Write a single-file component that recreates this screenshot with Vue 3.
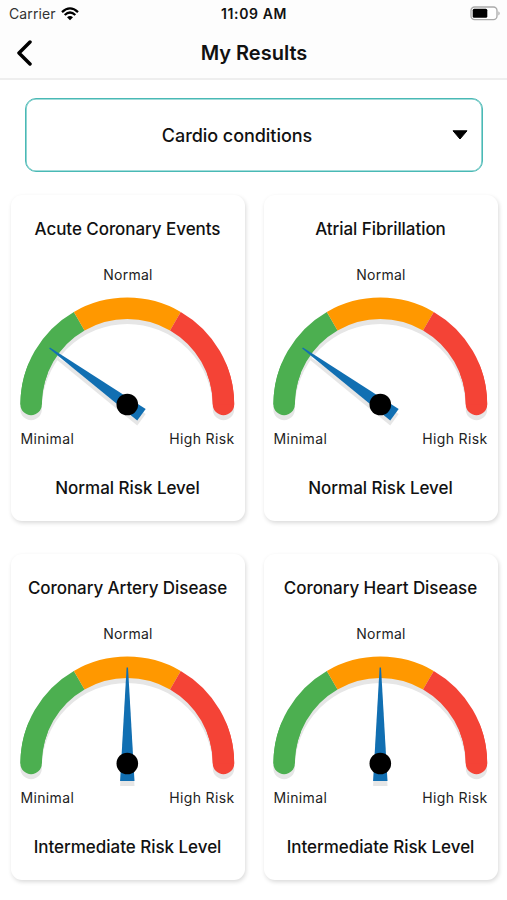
<script setup>
const results = [
  { title: 'Acute Coronary Events', level: 'Normal Risk Level', angle: -54 },
  { title: 'Atrial Fibrillation', level: 'Normal Risk Level', angle: -54 },
  { title: 'Coronary Artery Disease', level: 'Intermediate Risk Level', angle: 0 },
  { title: 'Coronary Heart Disease', level: 'Intermediate Risk Level', angle: 0 },
]
</script>

<template>
  <div class="screen">
    <header class="header">
      <div class="status">
        <div class="carrier">
          <span>Carrier</span>
          <svg class="wifi" viewBox="0 0 18 14">
            <path d="M1 5.1Q9-2.3 17 5.1" />
            <path d="M3.7 8Q9 3.1 14.3 8" />
            <path class="dot" d="M6 10.3Q9 7.7 12 10.3L9 13.3Z" />
          </svg>
        </div>
        <span class="time">11:09 AM</span>
        <svg class="battery" viewBox="0 0 31 15">
          <rect x="1" y="1" width="26" height="12.6" rx="3.6" />
          <rect class="charge" x="2.7" y="2.8" width="14.6" height="9" rx="1.5" />
          <path d="M28.4 5.2Q31 7.3 28.4 9.4Z" />
        </svg>
      </div>
      <div class="nav">
        <svg class="back" viewBox="0 0 16 26">
          <path d="M14 2L3 13L14 24" />
        </svg>
        <h1>My Results</h1>
      </div>
    </header>

    <main>
      <div class="select">
        <span class="select-label">Cardio conditions</span>
        <svg class="caret" viewBox="0 0 16 10">
          <path d="M1 .8H15L8 9Z" />
        </svg>
      </div>

      <div class="grid">
        <section v-for="item in results" :key="item.title" class="card">
          <h2>{{ item.title }}</h2>
          <p class="top-label">Normal</p>
          <svg class="gauge" viewBox="0 0 234 130">
            <g class="shadow" transform="translate(0 5)">
              <path class="arc round" d="M20.1 109.5A96.2 96.2 0 0 1 212.5 109.5" />
              <path class="needle" :transform="`rotate(${item.angle} 116.3 109.5)`" d="M115.6 13.4H117L123.5 127H109.1Z" />
            </g>
            <path class="arc round green" d="M20.1 109.5A96.2 96.2 0 0 1 26.5 75" />
            <path class="arc round red" d="M212.5 109.5A96.2 96.2 0 0 0 206.1 75" />
            <path class="arc green" d="M20.1 109.5A96.2 96.2 0 0 1 68.2 26.2" />
            <path class="arc orange" d="M68.2 26.2A96.2 96.2 0 0 1 164.4 26.2" />
            <path class="arc red" d="M164.4 26.2A96.2 96.2 0 0 1 212.5 109.5" />
            <path class="needle" :transform="`rotate(${item.angle} 116.3 109.5)`" d="M115.6 13.4H117L123.5 127H109.1Z" />
            <circle cx="116.3" cy="109.5" r="10.8" />
          </svg>
          <div class="ends"><span>Minimal</span><span>High Risk</span></div>
          <p class="level">{{ item.level }}</p>
        </section>
      </div>
    </main>
  </div>
</template>

<style>
body {
  background: #fff;
  overflow: hidden;
}
</style>

<style scoped>
.screen {
  width: 507px;
  height: 900px;
  overflow: hidden;
  font-family: Inter, "Liberation Sans", sans-serif;
  color: #111;
}
h1, h2, p { margin: 0; }
svg { display: block; }
.header {
  box-sizing: border-box;
  height: 80px;
  background: #fdfdfd;
  border-bottom: 2px solid #eee;
}
.status {
  height: 27px;
  display: grid;
  grid-template-columns: 1fr auto 1fr;
  align-items: center;
  padding: 0 6px 0 9px;
}
.carrier {
  display: flex;
  align-items: center;
  gap: 5px;
  font-size: 14px;
  letter-spacing: .1px;
  color: #333;
}
.wifi { width: 18px; height: 14px; fill: none; stroke: #000; stroke-width: 2.3; }
.wifi .dot { fill: #000; stroke: none; }
.time { margin-right: 2px; font-size: 14px; letter-spacing: .6px; font-weight: 600; }
.battery { width: 31px; height: 15px; justify-self: end; fill: #aaa; }
.battery rect { fill: #fff; stroke: #aaa; stroke-width: 1.3; }
.battery .charge { fill: #000; stroke: none; }
.nav {
  height: 51px;
  display: grid;
  grid-template-columns: 16px 1fr 16px;
  align-items: center;
  padding: 0 15px 0 16px;
}
.back { width: 16px; height: 26px; fill: none; stroke: #000; stroke-width: 3.5; stroke-linecap: round; stroke-linejoin: round; }
h1 { font-size: 20px; line-height: 24px; font-weight: 600; text-align: center; }
main { padding: 18px 9px 0 11px; }
.select {
  box-sizing: border-box;
  height: 74px;
  margin: 0 15px 0 14px;
  border: 1px solid #49b9b5;
  box-shadow: inset 0 0 0 .6px #49b9b5;
  border-radius: 11px;
  display: grid;
  grid-template-columns: 1fr 30px;
  align-items: center;
}
.select-label { padding-right: 4px; text-align: center; font-size: 18px; font-weight: 500; letter-spacing: -.05px; }
.caret { width: 16px; height: 10px; stroke: #000; stroke-width: 1; stroke-linejoin: round; }
.grid {
  display: grid;
  grid-template-columns: 234px 234px;
  justify-content: space-between;
  row-gap: 33px;
  margin-top: 23px;
}
.card {
  height: 326px;
  border-radius: 11px;
  background: #fff;
  box-shadow: 1px 2px 4px rgba(0, 0, 0, .15);
  text-align: center;
}
h2, .level { font-size: 17px; line-height: 22px; font-weight: 500; letter-spacing: -.06px; white-space: nowrap; }
h2 { padding-top: 23px; padding-right: 1px; }
.top-label { margin-top: 25px; font-size: 14px; line-height: 20px; letter-spacing: .25px; color: #222; }
.gauge { width: 234px; height: 130px; margin-top: 10px; overflow: visible; }
.arc { fill: none; stroke-width: 21.4; }
.round { stroke-linecap: round; }
.green { stroke: #4caf50; }
.orange { stroke: #ff9800; }
.red { stroke: #f44336; }
.needle { fill: #116fb2; }
.shadow .arc { stroke: #e6e6e6; }
.shadow .needle { fill: #e6e6e6; }
.ends {
  display: flex;
  justify-content: space-between;
  padding: 0 10.5px 0 9.5px;
  margin-top: 4px;
  font-size: 14px;
  line-height: 20px;
  letter-spacing: .35px;
  color: #222;
}
.level { margin-top: 28px; padding-right: 1px; letter-spacing: -.03px; }
</style>
